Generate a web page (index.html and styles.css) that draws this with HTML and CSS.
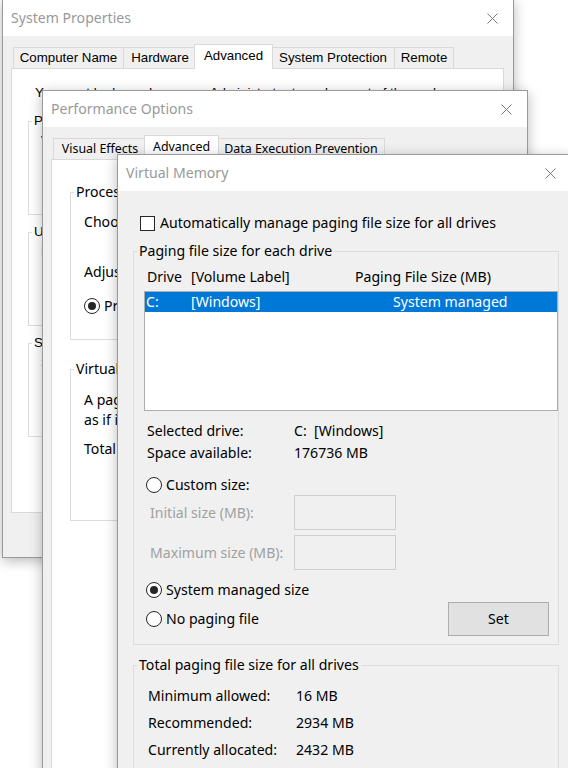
FILE: index.html
```html
<!DOCTYPE html>
<html lang="en">
<head>
<meta charset="utf-8">
<title>Virtual Memory</title>
<link rel="stylesheet" href="styles.css">
</head>
<body>
<main class="desktop">

  <section class="win win-sys">
    <header class="titlebar">
      <span class="title">System Properties</span>
      <span class="close"><svg viewBox="0 0 11 11" width="11" height="11"><path d="M0.5 0.5L10.5 10.5M10.5 0.5L0.5 10.5"/></svg></span>
    </header>
    <div class="client">
      <nav class="tabs tabs-sys">
        <span class="tab tw-cn">Computer Name</span>
        <span class="tab tw-hw">Hardware</span>
        <span class="tab sel tw-adv">Advanced</span>
        <span class="tab tw-sp">System Protection</span>
        <span class="tab tw-rm">Remote</span>
      </nav>
      <div class="panel panel-sys">
        <p class="sys-note">You must be logged on as an Administrator to make most of these changes.</p>
        <fieldset class="grp sys-grp first">
          <legend>Performance</legend>
          <div class="grp-body sys-body"><p>Visual effects, processor scheduling, memory usage,</p></div>
        </fieldset>
        <fieldset class="grp sys-grp">
          <legend>User Profiles</legend>
          <div class="grp-body sys-body"><p>Desktop settings related to your sign-in</p></div>
        </fieldset>
        <fieldset class="grp sys-grp">
          <legend>Startup and Recovery</legend>
          <div class="grp-body sys-body"><p>System startup, system failure, and debugging</p></div>
        </fieldset>
      </div>
    </div>
  </section>

  <section class="win win-perf">
    <header class="titlebar">
      <span class="title">Performance Options</span>
      <span class="close"><svg viewBox="0 0 11 11" width="11" height="11"><path d="M0.5 0.5L10.5 10.5M10.5 0.5L0.5 10.5"/></svg></span>
    </header>
    <div class="client">
      <nav class="tabs tabs-perf">
        <span class="tab tw-ve">Visual Effects</span>
        <span class="tab sel tw-padv">Advanced</span>
        <span class="tab tw-dep">Data Execution Prevention</span>
      </nav>
      <div class="panel panel-perf">
        <fieldset class="grp perf-grp1">
          <legend>Processor scheduling</legend>
          <div class="grp-body perf-body">
            <p class="pl1">Choose how to allocate processor resources.</p>
            <p class="pl2">Adjust for best performance of:</p>
            <div class="radio-line">
              <span class="radio"><span class="rb on"></span>Programs</span>
            </div>
          </div>
        </fieldset>
        <fieldset class="grp perf-grp2">
          <legend>Virtual memory</legend>
          <div class="grp-body perf-body">
            <p class="pl3">A paging file is an area on the hard disk that Windows uses<br>as if it were RAM.</p>
            <p class="pl4">Total paging file size for all drives:</p>
          </div>
        </fieldset>
      </div>
    </div>
  </section>

  <section class="win win-vm">
    <header class="titlebar">
      <span class="title">Virtual Memory</span>
      <span class="close"><svg viewBox="0 0 11 11" width="11" height="11"><path d="M0.5 0.5L10.5 10.5M10.5 0.5L0.5 10.5"/></svg></span>
    </header>
    <div class="vm-client">
      <div class="check-row"><span class="cb"></span>Automatically manage paging file size for all drives</div>

      <fieldset class="grp vm-grp1">
        <legend>Paging file size for each drive</legend>
        <div class="vm-body1">
          <div class="drive-head"><span>Drive</span><span>[Volume Label]</span><span>Paging File Size (MB)</span></div>
          <div class="listbox">
            <div class="drive-row"><span>C:</span><span>[Windows]</span><span>System managed</span></div>
          </div>
          <div class="info">
            <span>Selected drive:</span><span>C:&nbsp;&nbsp;[Windows]</span>
            <span>Space available:</span><span>176736 MB</span>
          </div>
          <div class="radio custom-radio"><span class="rb"></span>Custom size:</div>
          <div class="size-row"><span class="dis">Initial size (MB):</span><span class="textbox"></span></div>
          <div class="size-row second"><span class="dis">Maximum size (MB):</span><span class="textbox"></span></div>
          <div class="radio sysm-radio"><span class="rb on"></span>System managed size</div>
          <div class="nopage-row">
            <span class="radio"><span class="rb"></span>No paging file</span>
            <span class="btn">Set</span>
          </div>
        </div>
      </fieldset>

      <fieldset class="grp vm-grp2">
        <legend>Total paging file size for all drives</legend>
        <div class="totals">
          <span>Minimum allowed:</span><span>16 MB</span>
          <span>Recommended:</span><span>2934 MB</span>
          <span>Currently allocated:</span><span>2432 MB</span>
        </div>
      </fieldset>
    </div>
  </section>

</main>
</body>
</html>
```
FILE: styles.css
```css
* { box-sizing: border-box; }
html, body { margin: 0; height: 100%; }
body {
  background: #fff;
  font-family: "Noto Sans", "Open Sans", sans-serif;
  font-size: 14.1px;
  color: #000;
  overflow: hidden;
}
p { margin: 0; }

.desktop { position: relative; width: 568px; height: 768px; overflow: hidden; }

/* windows on the desktop canvas */
.win {
  position: absolute;
  display: flex;
  flex-direction: column;
  background: #f0f0f0;
  border: 1px solid #9a9a9a;
  box-shadow: 0 3px 12px rgba(0, 0, 0, 0.28);
}
.win-sys  { left: 2px;   top: -1px; width: 512px; height: 559px; z-index: 1; }
.win-perf { left: 42px;  top: 90px; width: 486px; height: 720px; z-index: 2; }
.win-vm   { left: 117px; top: 154px; width: 455px; height: 640px; z-index: 3; }

.titlebar {
  flex: none;
  height: 36px;
  background: #fff;
  display: flex;
  align-items: center;
  padding-left: 8px;
}
.title { flex: 1; color: #999; line-height: 20px; white-space: nowrap; }
.close { width: 42px; height: 36px; display: flex; align-items: center; justify-content: center; }
.close svg { stroke: #7a7a7a; stroke-width: 1; fill: none; }

.client {
  flex: 1;
  display: flex;
  flex-direction: column;
  padding: 8px 9px 0 8px;
  min-height: 0;
}

/* tabs */
.tabs {
  flex: none;
  display: flex;
  align-items: flex-end;
  padding-left: 2px;
  position: relative;
  z-index: 1;
}
.tab {
  flex: none;
  height: 21px;
  line-height: 19px;
  border: 1px solid #d9d9d9;
  border-bottom: 0;
  background: #f0f0f0;
  text-align: center;
  white-space: nowrap;
  margin-right: -1px;
}
.tab.sel {
  height: 25px;
  line-height: 21px;
  background: #fff;
  margin: 0 -2px -1px -2px;
  position: relative;
  z-index: 2;
}
.tabs-sys .tab { font-family: "Liberation Sans", Arial, sans-serif; font-size: 13.3px; }
.tabs-perf .tab { font-size: 12.4px; }
.tw-cn { width: 111px; }
.tw-hw { width: 74px; }
.tw-adv { width: 79px; }
.tw-sp { width: 124px; }
.tw-rm { width: 60px; }
.tw-ve { width: 94px; }
.tw-padv { width: 75px; }
.tw-dep { width: 168px; }

.panel { background: #fff; border: 1px solid #d9d9d9; }
.panel-sys {
  flex: none;
  height: 445px;
  padding: 14px 9px 0 16px;
  font-family: "Liberation Sans", Arial, sans-serif;
  font-size: 13.3px;
}
.panel-perf { flex: 1; padding: 22px 9px 0 18px; }

/* group boxes */
.grp {
  margin: 0;
  padding: 0;
  border: 1px solid #dcdcdc;
  min-width: 0;
}
.grp legend { margin-left: 3px; padding: 0 2px; line-height: 20px; }

.sys-note { margin-left: 7px; line-height: 20px; white-space: nowrap; }
.sys-grp { height: 104px; margin-top: 7px; }
.sys-grp.first { margin-top: 8px; }
.sys-body { padding: 0 12px; line-height: 20px; }

.perf-grp1 { height: 158px; }
.perf-grp2 { height: 162px; margin-top: 19px; }
.perf-body { padding: 0 13px; line-height: 20px; white-space: nowrap; }
.pl1 { margin-top: 10px; }
.pl2 { margin-top: 30px; }
.radio-line { margin-top: 14px; display: flex; }
.pl3 { margin-top: 11px; }
.pl4 { margin-top: 9px; }

/* radio + checkbox */
.radio { display: flex; align-items: center; line-height: 20px; white-space: nowrap; }
.rb {
  flex: none;
  width: 16px;
  height: 16px;
  border: 1px solid #262626;
  border-radius: 50%;
  background: #fff;
  margin-right: 4px;
  position: relative;
}
.rb.on::after {
  content: "";
  position: absolute;
  left: 3px;
  top: 3px;
  width: 8px;
  height: 8px;
  border-radius: 50%;
  background: #262626;
}
.cb {
  flex: none;
  width: 15px;
  height: 15px;
  border: 1px solid #262626;
  background: #fff;
  margin-right: 5px;
}

/* Virtual Memory dialog */
.vm-client { flex: 1; padding: 22px 12px 0 15px; }
.check-row { display: flex; align-items: center; line-height: 20px; margin-left: 7px; white-space: nowrap; }
.vm-grp1 { margin-top: 8px; }
.vm-body1 { padding: 6px 0 8px 10px; }
.drive-head {
  display: grid;
  grid-template-columns: 44px 164px auto;
  padding-left: 3px;
  line-height: 20px;
  white-space: nowrap;
}
.listbox {
  margin-top: 4px;
  height: 120px;
  border: 1px solid #adadad;
  background: #fff;
}
.drive-row {
  display: grid;
  grid-template-columns: 45px 202px auto;
  height: 20px;
  line-height: 20px;
  padding-left: 1px;
  background: #0078d7;
  color: #fff;
  white-space: nowrap;
}
.info {
  margin-top: 9px;
  display: grid;
  grid-template-columns: 147px auto;
  padding-left: 3px;
  line-height: 22px;
}
.custom-radio { margin-top: 11px; padding-left: 2px; }
.size-row {
  display: grid;
  grid-template-columns: 144px 102px;
  align-items: center;
  padding-left: 6px;
  height: 35px;
}
.size-row.second { margin-top: 5px; }
.dis { color: #a0a0a0; white-space: nowrap; }
.textbox { height: 35px; border: 1px solid #cfcfcf; background: #f0f0f0; }
.sysm-radio { margin-top: 10px; padding-left: 2px; }
.nopage-row {
  margin-top: 2px;
  display: flex;
  align-items: center;
  justify-content: space-between;
  padding: 0 9px 0 2px;
}
.btn {
  width: 101px;
  height: 34px;
  line-height: 32px;
  text-align: center;
  background: #e1e1e1;
  border: 1px solid #adadad;
}
.vm-grp2 { margin-top: 10px; height: 200px; }
.totals {
  display: grid;
  grid-template-columns: 148px auto;
  padding: 7px 0 0 14px;
  line-height: 27px;
  white-space: nowrap;
}
```
